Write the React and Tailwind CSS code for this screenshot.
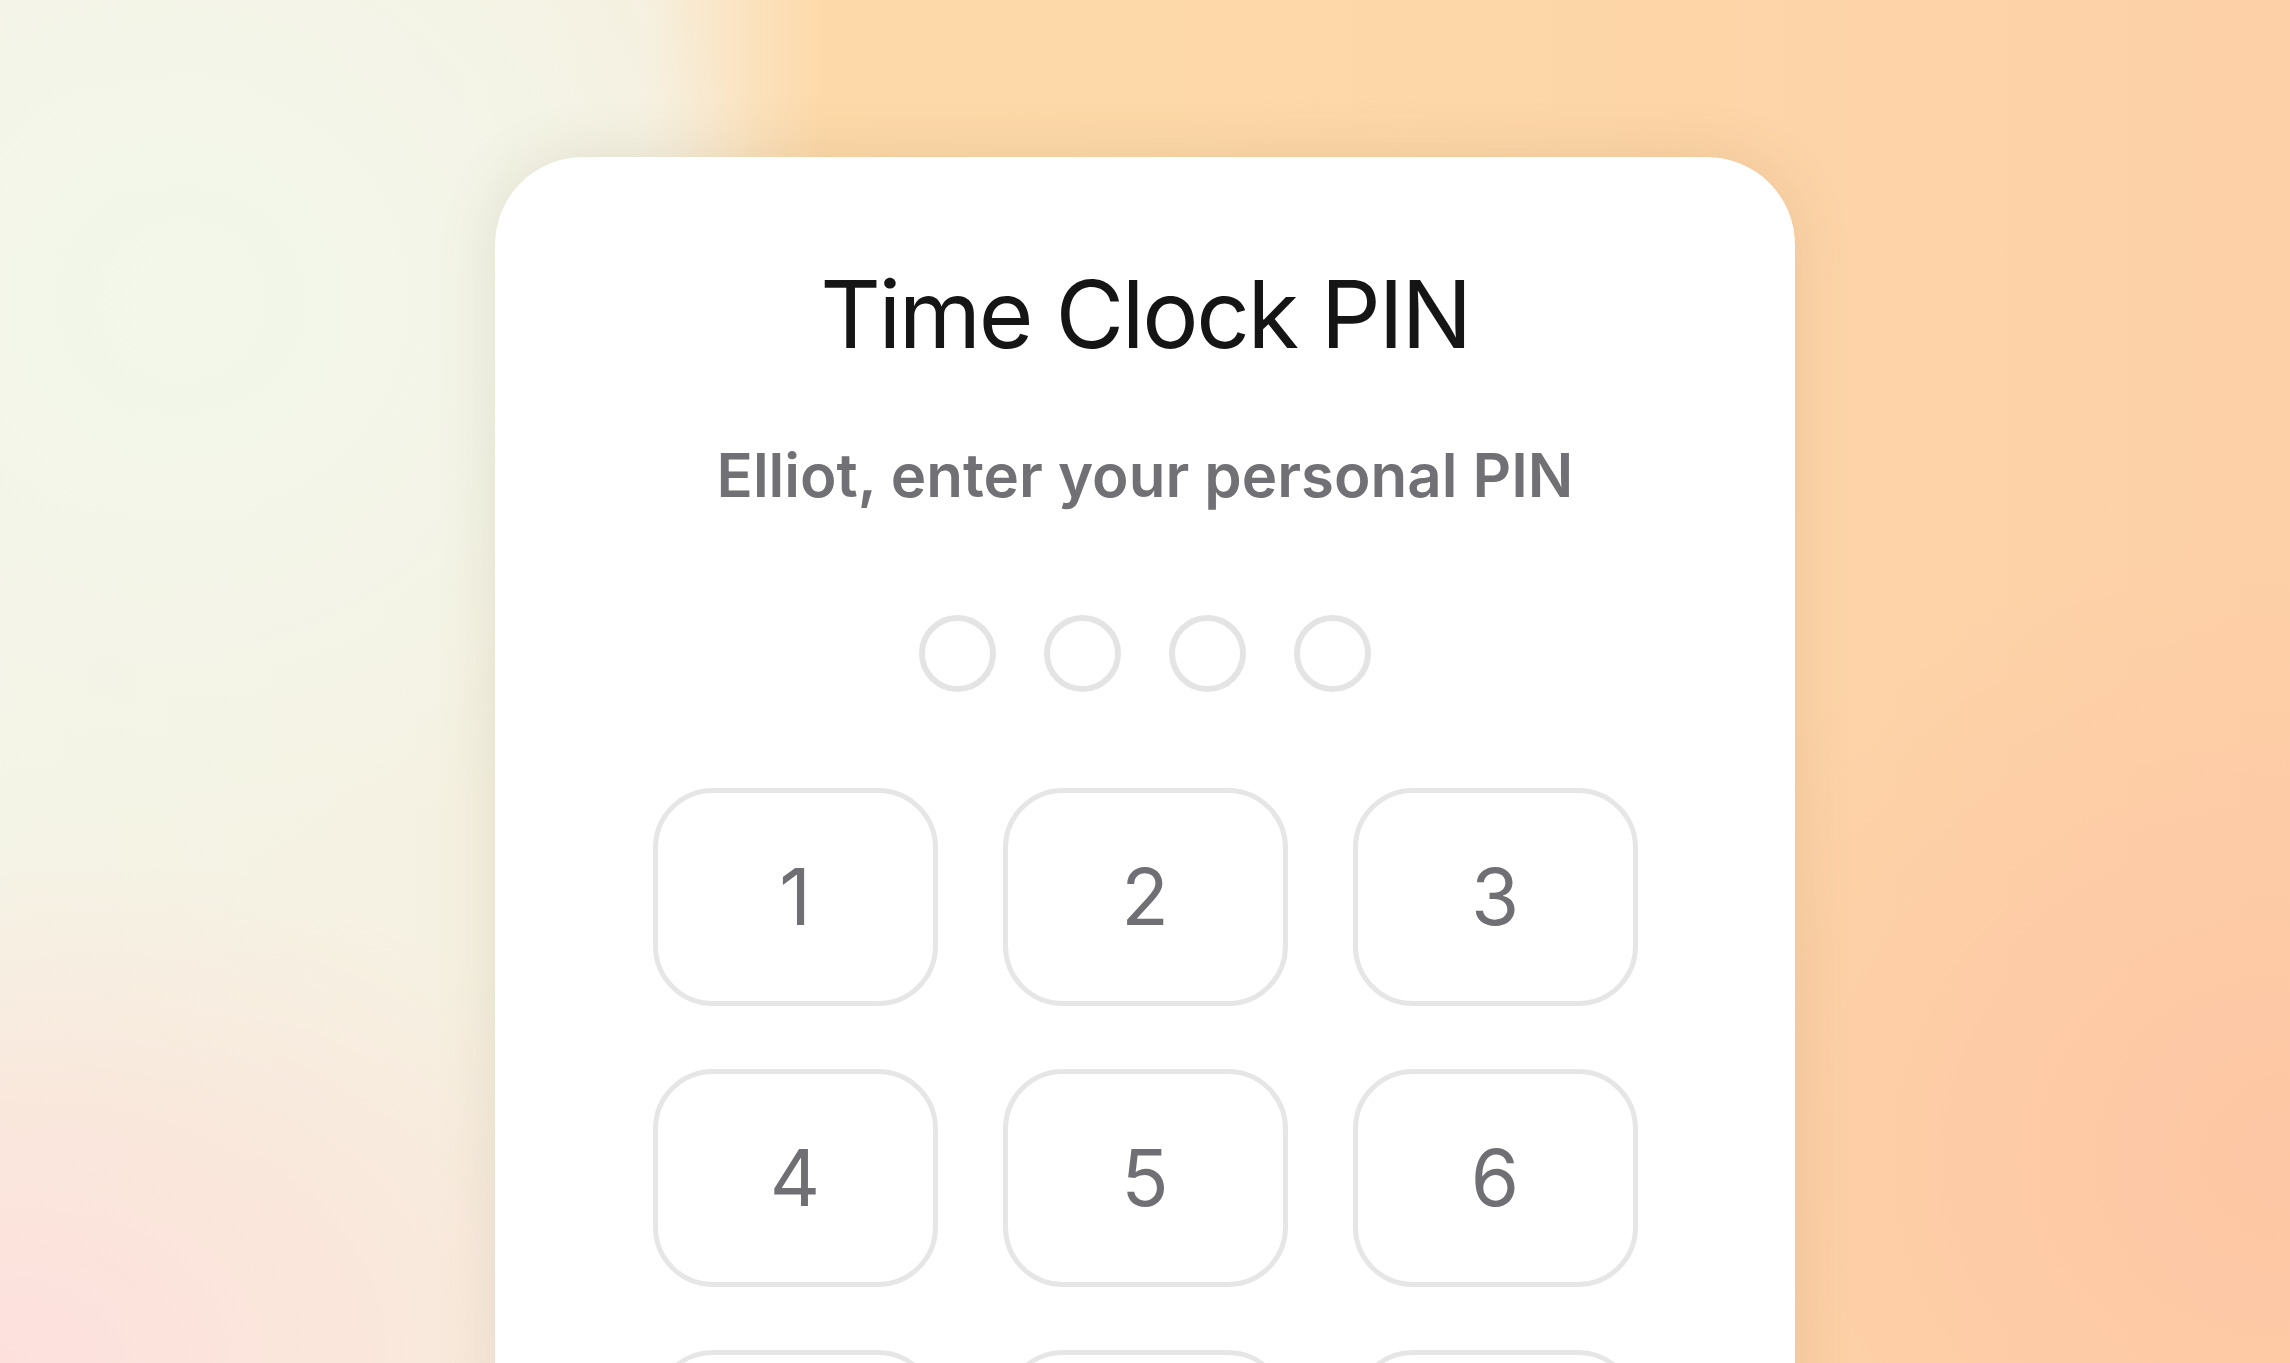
import React from "react";

const keys = ["1", "2", "3", "4", "5", "6", "7", "8", "9"];

export default function App() {
  return (
    <div
      className="relative h-[1363px] w-full overflow-hidden flex justify-center pt-[157px] bg-[radial-gradient(ellipse_26%_42%_at_8%_22%,rgba(242,247,234,1)_0%,rgba(243,245,232,0.9)_55%,rgba(243,245,232,0)_100%),radial-gradient(ellipse_32%_38%_at_0%_100%,rgba(253,224,220,1)_0%,rgba(252,226,216,0.7)_50%,rgba(252,226,216,0)_100%),radial-gradient(ellipse_30%_45%_at_100%_85%,rgba(253,198,164,1)_0%,rgba(253,200,166,0.6)_50%,rgba(253,200,166,0)_100%),linear-gradient(to_right,#f4f4e6_0%,#f6f0e0_28%,#fbe3c0_32.5%,#fdd9a9_36%,#fdd7a8_65%,#fdd0a7_100%)]"
      style={{ fontFamily: "Inter, 'Noto Sans', sans-serif" }}
    >
      <div className="w-[1300px] h-[1500px] shrink-0 bg-white rounded-t-[88px] shadow-[0_0_60px_rgba(120,100,60,0.14)] flex flex-col items-center pt-[110px]">
        <h1 className="text-[94px] leading-none font-normal text-[#151515] tracking-[-0.025em]">
          Time Clock PIN
        </h1>
        <p className="mt-[84px] text-[60px] leading-none font-semibold text-[#707075]">
          Elliot, enter your personal PIN
        </p>
        <div className="mt-[110px] flex gap-[48px]">
          {[0, 1, 2, 3].map((i) => (
            <div
              key={i}
              className="w-[77px] h-[77px] rounded-full border-[6px] border-[#e4e4e4] box-border"
            />
          ))}
        </div>
        <div className="mt-[96px] grid grid-cols-[285px_285px_285px] gap-x-[65px] gap-y-[63px]">
          {keys.map((k) => (
            <button
              key={k}
              className="w-[285px] h-[218px] rounded-[60px] border-[5px] border-[#e6e6e6] bg-white flex items-center justify-center text-[78px] leading-none font-normal text-[#6f6f74]"
            >
              {k}
            </button>
          ))}
        </div>
      </div>
    </div>
  );
}
